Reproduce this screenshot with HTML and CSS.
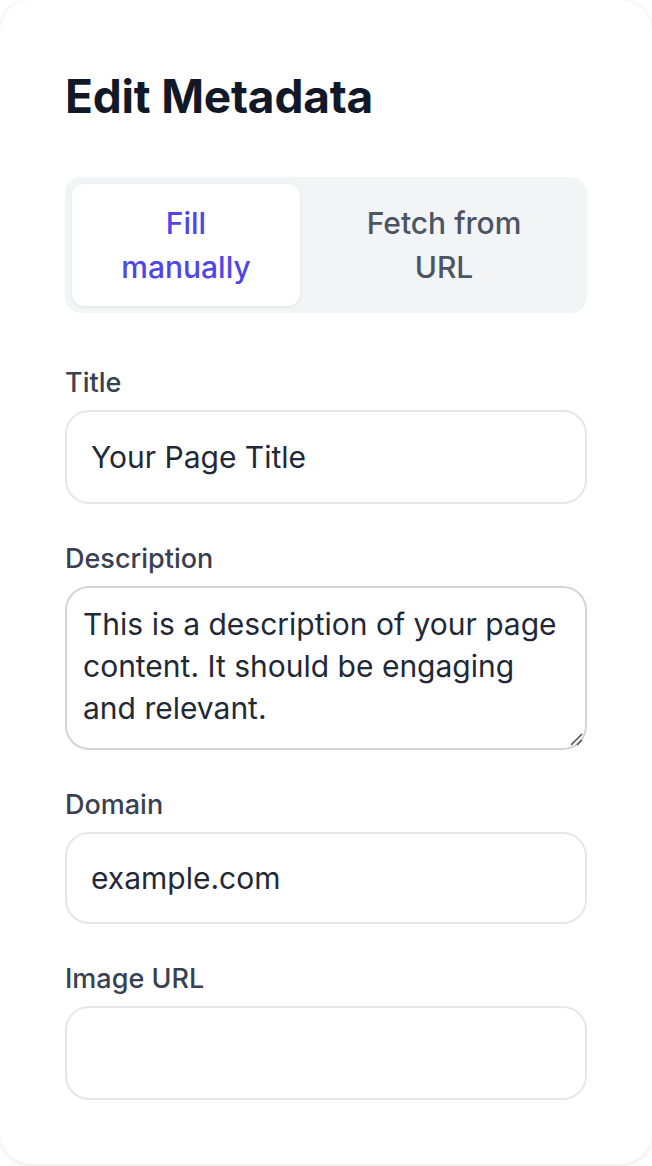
FILE: index.html
```html
<!DOCTYPE html>
<html lang="en">
<head>
<meta charset="utf-8">
<title>Edit Metadata</title>
<link rel="stylesheet" href="styles.css">
</head>
<body>
<div class="card">
  <h1 class="heading">Edit Metadata</h1>
  <div class="tabs">
    <button class="tab tab-active">Fill manually</button>
    <button class="tab tab-url">Fetch from URL</button>
  </div>
  <div class="field">
    <label class="label">Title</label>
    <div class="input">Your Page Title</div>
  </div>
  <div class="field">
    <label class="label">Description</label>
    <div class="textarea">This is a description of your page content. It should be engaging and relevant.<svg class="grip" width="16" height="16" viewBox="0 0 16 16"><path d="M15 4 L4 15 M15 10 L10 15" stroke="#555" stroke-width="1.6" fill="none"/></svg></div>
  </div>
  <div class="field">
    <label class="label">Domain</label>
    <div class="input input-domain">example.com</div>
  </div>
  <div class="field">
    <label class="label">Image URL</label>
    <div class="input"></div>
  </div>
</div>
</body>
</html>
```
FILE: styles.css
```css
* { box-sizing: border-box; }
html, body { margin: 0; padding: 0; background: #ffffff; }
body { font-family: Inter, "Noto Sans", sans-serif; height: 1166px; overflow: hidden; }
.card {
  height: 1164px;
  background: #ffffff;
  border-radius: 32px;
  box-shadow: 0 1px 6px rgba(0,0,0,0.10);
  padding: 64px 65px 0 65px;
}
.heading {
  margin: 0;
  font-size: 46px;
  font-weight: 700;
  color: #111827;
  line-height: 64px;
  letter-spacing: -0.2px;
}
.tabs {
  margin-top: 49px;
  margin-bottom: 15px;
  display: flex;
  gap: 8px;
  background: #f3f4f6;
  border-radius: 16px;
  padding: 7px;
  height: 136px;
}
.tab {
  border: 0;
  background: transparent;
  font-family: Inter, "Noto Sans", sans-serif;
  font-size: 30px;
  font-weight: 500;
  line-height: 44px;
  color: #4b5563;
  border-radius: 12px;
  padding: 0 32px;
  text-align: center;
}
.tab-active {
  flex: 0 0 228px;
  background: #ffffff;
  color: #4f46e5;
  box-shadow: 0 1px 3px rgba(0,0,0,0.08);
}
.tab-url { flex: 1 1 auto; }
.field { display: flex; flex-direction: column; }
.label {
  font-size: 27px;
  font-weight: 500;
  color: #374151;
  line-height: 40px;
  margin-top: 35px;
  margin-bottom: 7px;
}
.input {
  height: 94px;
  border: 2px solid #e5e7eb;
  border-radius: 24px;
  padding: 0 24px;
  font-size: 30px;
  color: #1f2937;
  display: flex;
  align-items: center;
}
.input-domain { height: 92px; }
.textarea {
  position: relative;
  height: 164px;
  border: 2px solid #d1d5db;
  border-radius: 24px;
  padding: 15px 16px;
  font-size: 30px;
  line-height: 42px;
  color: #1f2937;
}
.grip { position: absolute; right: 2px; bottom: 2px; }
```
